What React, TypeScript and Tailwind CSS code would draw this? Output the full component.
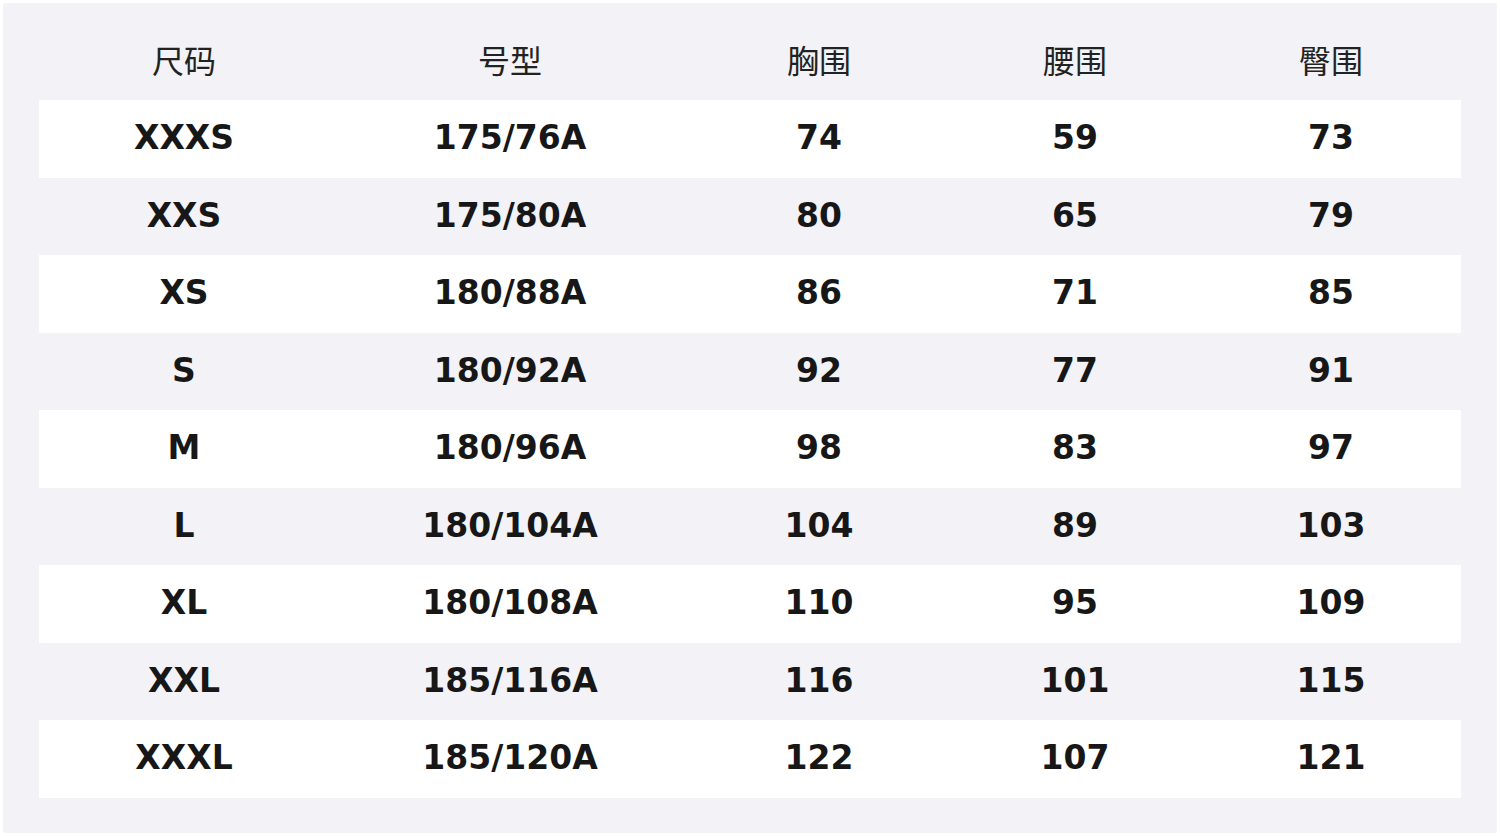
import React from "react";

interface SizeRow {
  size: string;
  fit: string;
  chest: number;
  waist: number;
  hip: number;
}

const HEADERS = ["尺码", "号型", "胸围", "腰围", "臀围"];

const ROWS: SizeRow[] = [
  { size: "XXXS", fit: "175/76A", chest: 74, waist: 59, hip: 73 },
  { size: "XXS", fit: "175/80A", chest: 80, waist: 65, hip: 79 },
  { size: "XS", fit: "180/88A", chest: 86, waist: 71, hip: 85 },
  { size: "S", fit: "180/92A", chest: 92, waist: 77, hip: 91 },
  { size: "M", fit: "180/96A", chest: 98, waist: 83, hip: 97 },
  { size: "L", fit: "180/104A", chest: 104, waist: 89, hip: 103 },
  { size: "XL", fit: "180/108A", chest: 110, waist: 95, hip: 109 },
  { size: "XXL", fit: "185/116A", chest: 116, waist: 101, hip: 115 },
  { size: "XXXL", fit: "185/120A", chest: 122, waist: 107, hip: 121 },
];

const GRID = "grid grid-cols-[290px_362px_256px_256px_256px] items-center";

export default function App() {
  return (
    <div className="w-[1500px] h-[836px] bg-white p-[3px]">
      <div className="h-full rounded-[3px] bg-[#f2f2f7] pt-[19.5px] px-[36px]">
        {/* header */}
        <div
          className={`${GRID} h-[77.5px] text-[32px] text-[#222] font-['Noto_Sans_CJK_SC',sans-serif]`}
        >
          {HEADERS.map((h) => (
            <div key={h} className="text-center leading-none pb-[4px]">
              {h}
            </div>
          ))}
        </div>

        {/* body */}
        {ROWS.map((row, i) => (
          <div
            key={row.size}
            className={`${GRID} h-[77.5px] text-[33px] font-bold text-[#171717] font-['DejaVu_Sans',sans-serif] ${
              i % 2 === 0 ? "bg-white" : "bg-transparent"
            }`}
          >
            <div className="text-center leading-none pb-[2px]">{row.size}</div>
            <div className="text-center leading-none pb-[2px]">{row.fit}</div>
            <div className="text-center leading-none pb-[2px]">{row.chest}</div>
            <div className="text-center leading-none pb-[2px]">{row.waist}</div>
            <div className="text-center leading-none pb-[2px]">{row.hip}</div>
          </div>
        ))}
      </div>
    </div>
  );
}
